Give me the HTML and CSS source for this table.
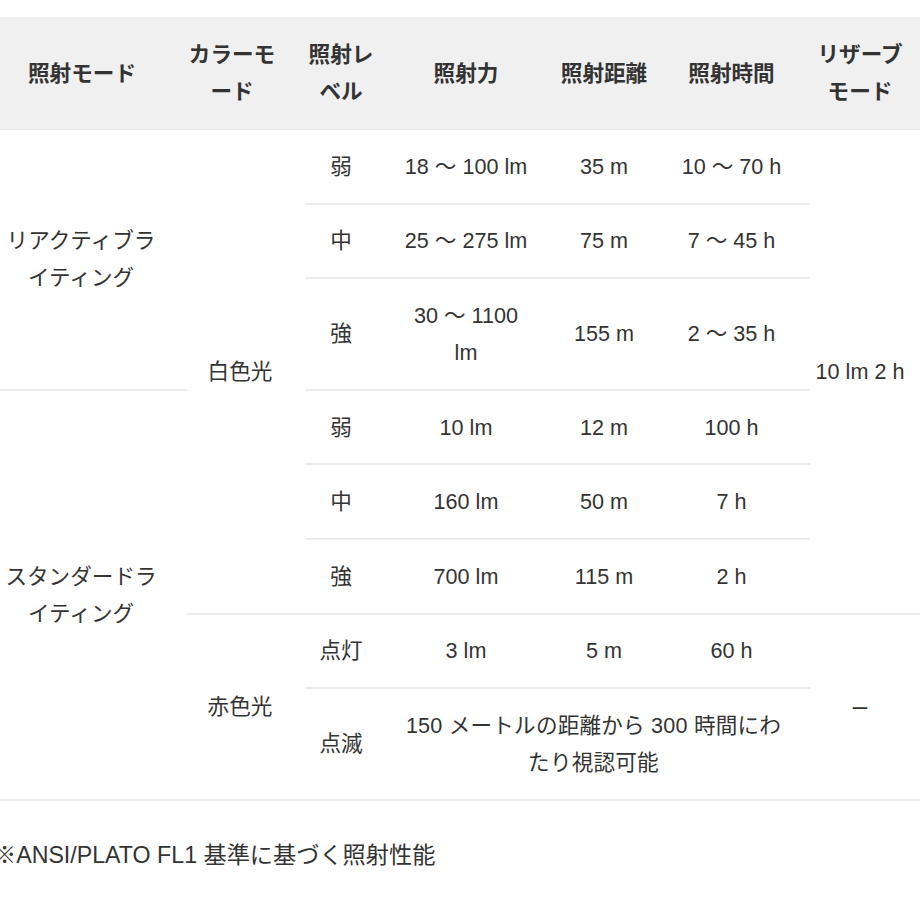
FILE: index.html
```html
<!DOCTYPE html>
<html lang="ja">
<head>
<meta charset="utf-8">
<title>照射性能</title>
<link rel="stylesheet" href="styles.css">
</head>
<body>
<div class="page">
  <table class="spec">
    <colgroup>
      <col class="c1"><col class="c2"><col class="c3"><col class="c4"><col class="c5"><col class="c6"><col class="c7">
    </colgroup>
    <thead>
      <tr>
        <th class="h1">照射モード</th>
        <th class="h2">カラーモ<br>ード</th>
        <th>照射レ<br>ベル</th>
        <th>照射力</th>
        <th>照射距離</th>
        <th>照射時間</th>
        <th class="h7">リザーブ<br>モード</th>
      </tr>
    </thead>
    <tbody>
      <tr>
        <td class="mode" rowspan="3">リアクティブラ<br>イティング</td>
        <td class="color" rowspan="6">白色光</td>
        <td>弱</td>
        <td>18 ～ 100 lm</td>
        <td>35 m</td>
        <td>10 ～ 70 h</td>
        <td class="reserve" rowspan="6">10 lm 2 h</td>
      </tr>
      <tr>
        <td>中</td>
        <td>25 ～ 275 lm</td>
        <td>75 m</td>
        <td>7 ～ 45 h</td>
      </tr>
      <tr>
        <td>強</td>
        <td>30 ～ 1100<br>lm</td>
        <td>155 m</td>
        <td>2 ～ 35 h</td>
      </tr>
      <tr>
        <td class="mode" rowspan="5">スタンダードラ<br>イティング</td>
        <td>弱</td>
        <td>10 lm</td>
        <td>12 m</td>
        <td>100 h</td>
      </tr>
      <tr>
        <td>中</td>
        <td>160 lm</td>
        <td>50 m</td>
        <td>7 h</td>
      </tr>
      <tr>
        <td>強</td>
        <td>700 lm</td>
        <td>115 m</td>
        <td>2 h</td>
      </tr>
      <tr>
        <td class="color" rowspan="2">赤色光</td>
        <td>点灯</td>
        <td>3 lm</td>
        <td>5 m</td>
        <td>60 h</td>
        <td class="reserve dash" rowspan="2">–</td>
      </tr>
      <tr>
        <td>点滅</td>
        <td class="wide" colspan="3">150 メートルの距離から 300 時間にわ<br>たり視認可能</td>
      </tr>
    </tbody>
  </table>
  <p class="note">※ANSI/PLATO FL1 基準に基づく照射性能</p>
</div>
</body>
</html>
```

FILE: styles.css
```css
html, body {
  margin: 0;
  padding: 0;
  background: #ffffff;
}

body {
  font-family: "Liberation Sans", "Noto Sans CJK JP", sans-serif;
  font-size: 21.6px;
  color: #333333;
  width: 920px;
  overflow: hidden;
}

.page {
  padding-top: 17px;
}

.spec {
  width: 920px;
  border-collapse: collapse;
  table-layout: fixed;
}

.c1 { width: 187px; }
.c2 { width: 118px; }
.c3 { width: 72px; }
.c4 { width: 178px; }
.c5 { width: 98px; }
.c6 { width: 157px; }
.c7 { width: 110px; }

.spec th {
  background: #f0f0f0;
  font-weight: bold;
  line-height: 37px;
  padding: 19px 0;
  text-align: center;
  vertical-align: middle;
  border-bottom: 1px solid #e6e6e6;
  color: #333333;
}

.spec th.h1 { padding-right: 23px; }
.spec th.h2 { padding-right: 28px; }
.spec th.h7 { padding-right: 10px; }

.spec td {
  line-height: 37px;
  padding: 17.8px 0;
  text-align: center;
  vertical-align: middle;
  border-bottom: 2px solid #ececec;
}

.spec td.mode { padding-right: 25px; }
.spec td.color { padding-right: 12px; }
.spec td.reserve { padding-right: 10px; }
.spec td.wide { letter-spacing: 0.2px; }
.spec td.dash { font-size: 26px; }

.note {
  margin: 36px 0 0 -7px;
  font-size: 23.2px;
  line-height: 37px;
}
```
